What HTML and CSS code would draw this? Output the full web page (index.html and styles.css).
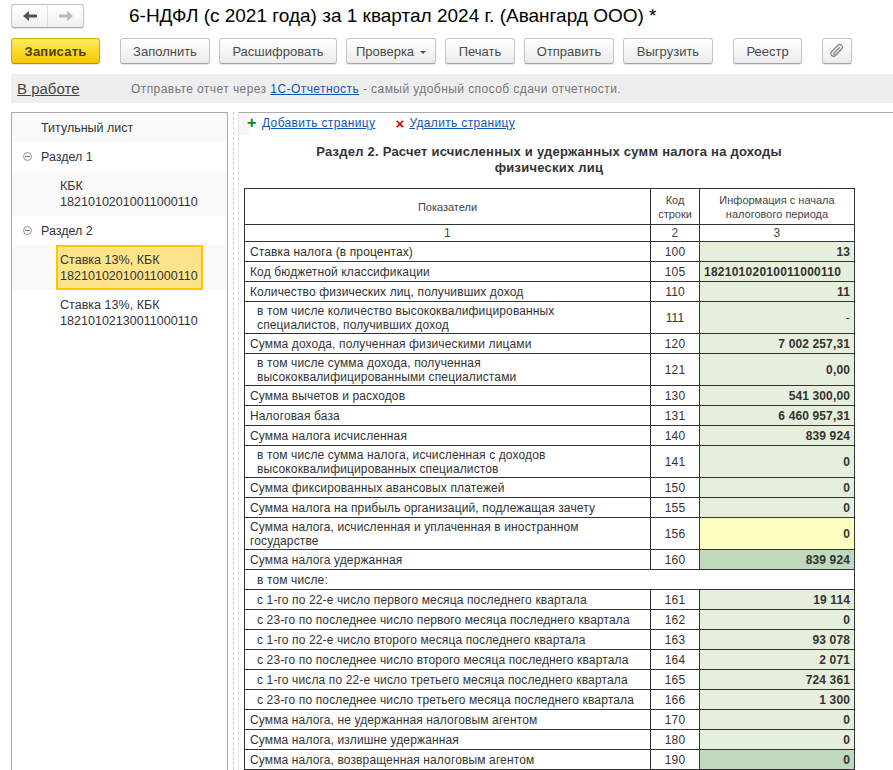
FILE: index.html
```html
<!DOCTYPE html>
<html lang="ru">
<head>
    <meta charset="UTF-8">
    <title>6-НДФЛ</title>
    <link rel="stylesheet" href="styles.css">
</head>
<body>
    <div class="head">
        <div class="nav">
            <div class="nav-btn">
                <svg width="16" height="12" viewBox="0 0 16 12"><path d="M1 6 L7 1 V4.500 H15 V7.500 H7 V11 Z" fill="#555"/></svg>
            </div>
            <div class="nav-btn">
                <svg width="16" height="12" viewBox="0 0 16 12"><path d="M15 6 L9 1 V4.500 H1 V7.500 H9 V11 Z" fill="#bbb"/></svg>
            </div>
        </div>
        <h1 class="title">6-НДФЛ (с 2021 года) за 1 квартал 2024 г. (Авангард ООО) *</h1>
    </div>

    <div class="toolbar">
        <div class="btn primary">Записать</div>
        <div class="btn w90 gap-big">Заполнить</div>
        <div class="btn w118">Расшифровать</div>
        <div class="btn w90">Проверка <span class="caret"></span></div>
        <div class="btn w70">Печать</div>
        <div class="btn w90">Отправить</div>
        <div class="btn w90">Выгрузить</div>
        <div class="btn w69 gap-big">Реестр</div>
        <div class="btn w30 gap-big">
            <svg width="16" height="16" viewBox="0 0 16 16"><path d="M5 13.500 L12.500 6 C14 4.500 13.500 3 12.500 2.200 C11.500 1.400 10 1.300 9 2.300 L2.800 8.500 C1.500 9.800 1.800 11.500 2.700 12.500 C3.700 13.500 5.300 13.800 6.500 12.500 L12 7 M10.800 4.200 L4.800 10.200 C4.300 10.800 5 11.500 5.600 11" fill="none" stroke="#888" stroke-width="1.300"/></svg>
        </div>
    </div>

    <div class="status">
        <a class="status-name">В работе</a>
        <span class="status-text">Отправьте отчет через <a class="link">1С-Отчетность</a> - самый удобный способ сдачи отчетности.</span>
    </div>

    <div class="main">
        <div class="tree">
            <div class="tree-row alt top">Титульный лист</div>
            <div class="tree-row group"><span class="minus"></span>Раздел 1</div>
            <div class="tree-row alt leaf"><div class="leaf-text">КБК<br>18210102010011000110</div></div>
            <div class="tree-row group"><span class="minus"></span>Раздел 2</div>
            <div class="tree-row alt leaf"><div class="leaf-text selected">Ставка 13%, КБК<br>18210102010011000110</div></div>
            <div class="tree-row leaf"><div class="leaf-text">Ставка 13%, КБК<br>18210102130011000110</div></div>
        </div>
        <div class="splitter"></div>
        <div class="content">
            <div class="actions">
                <span class="plus">+</span><a class="link">Добавить страницу</a>
                <span class="cross">×</span><a class="link">Удалить страницу</a>
            </div>
            <h2 class="sheet-title">Раздел 2. Расчет исчисленных и удержанных сумм налога на доходы физических лиц</h2>
            <table class="report">
                <colgroup><col class="c1"><col class="c2"><col class="c3"></colgroup>
                <tr class="r36"><td class="head-cell small">Показатели</td><td class="head-cell small">Код<br>строки</td><td class="head-cell small">Информация с начала<br>налогового периода</td></tr>
                <tr class="r17"><td class="head-cell">1</td><td class="head-cell">2</td><td class="head-cell">3</td></tr>
                <tr><td>Ставка налога (в процентах)</td><td class="code">100</td><td class="val">13</td></tr>
                <tr><td>Код бюджетной классификации</td><td class="code">105</td><td class="val kbk">18210102010011000110</td></tr>
                <tr><td>Количество физических лиц, получивших доход</td><td class="code">110</td><td class="val">11</td></tr>
                <tr class="r32"><td class="sub">в том числе количество высококвалифицированных<br>специалистов, получивших доход</td><td class="code">111</td><td class="val plain">-</td></tr>
                <tr><td>Сумма дохода, полученная физическими лицами</td><td class="code">120</td><td class="val">7 002 257,31</td></tr>
                <tr class="r32"><td class="sub">в том числе сумма дохода, полученная<br>высококвалифицированными специалистами</td><td class="code">121</td><td class="val">0,00</td></tr>
                <tr><td>Сумма вычетов и расходов</td><td class="code">130</td><td class="val">541 300,00</td></tr>
                <tr><td>Налоговая база</td><td class="code">131</td><td class="val">6 460 957,31</td></tr>
                <tr><td>Сумма налога исчисленная</td><td class="code">140</td><td class="val">839 924</td></tr>
                <tr class="r32"><td class="sub">в том числе сумма налога, исчисленная с доходов<br>высококвалифицированных специалистов</td><td class="code">141</td><td class="val">0</td></tr>
                <tr><td>Сумма фиксированных авансовых платежей</td><td class="code">150</td><td class="val">0</td></tr>
                <tr><td>Сумма налога на прибыль организаций, подлежащая зачету</td><td class="code">155</td><td class="val">0</td></tr>
                <tr class="r32"><td>Сумма налога, исчисленная и уплаченная в иностранном<br>государстве</td><td class="code">156</td><td class="val yellow">0</td></tr>
                <tr><td>Сумма налога удержанная</td><td class="code">160</td><td class="val dark">839 924</td></tr>
                <tr><td class="sub" colspan="3">в том числе:</td></tr>
                <tr><td class="sub">с 1-го по 22-е число первого месяца последнего квартала</td><td class="code">161</td><td class="val">19 114</td></tr>
                <tr><td class="sub">с 23-го по последнее число первого месяца последнего квартала</td><td class="code">162</td><td class="val">0</td></tr>
                <tr><td class="sub">с 1-го по 22-е число второго месяца последнего квартала</td><td class="code">163</td><td class="val">93 078</td></tr>
                <tr><td class="sub">с 23-го по последнее число второго месяца последнего квартала</td><td class="code">164</td><td class="val">2 071</td></tr>
                <tr><td class="sub">с 1-го числа по 22-е число третьего месяца последнего квартала</td><td class="code">165</td><td class="val">724 361</td></tr>
                <tr><td class="sub">с 23-го по последнее число третьего месяца последнего квартала</td><td class="code">166</td><td class="val">1 300</td></tr>
                <tr><td>Сумма налога, не удержанная налоговым агентом</td><td class="code">170</td><td class="val">0</td></tr>
                <tr><td>Сумма налога, излишне удержанная</td><td class="code">180</td><td class="val">0</td></tr>
                <tr><td>Сумма налога, возвращенная налоговым агентом</td><td class="code">190</td><td class="val dark">0</td></tr>
            </table>
        </div>
    </div>
</body>
</html>
```

FILE: styles.css
```css
html, body {
    height: 770px;
    overflow: hidden;
}
body {
    margin: 0;
    background-color: #fff;
    font-family: "Liberation Sans", Arial, sans-serif;
    font-size: 12px;
    color: #333;
}
a.link {
    color: #0a56b8;
    text-decoration: underline;
}

/* head */
.head {
    display: flex;
    align-items: center;
    height: 24px;
    padding: 4px 0 0 11px;
}
.nav {
    display: flex;
    width: 73px;
    height: 24px;
    box-sizing: border-box;
    border: 1px solid #c4c4c4;
    border-bottom-color: #a8a8a8;
    border-radius: 3px;
    background: linear-gradient(#fff, #f0f0f0);
    box-shadow: 0 1px 1px rgba(0, 0, 0, 0.12);
}
.nav-btn {
    flex: 1;
    display: flex;
    align-items: center;
    justify-content: center;
}
.nav-btn + .nav-btn {
    border-left: 1px solid #ddd;
}
.title {
    margin: 0 0 0 45px;
    font-size: 19px;
    font-weight: normal;
    color: #000;
    white-space: nowrap;
}

/* toolbar */
.toolbar {
    display: flex;
    gap: 9px;
    height: 26px;
    margin-top: 10px;
    padding-left: 11px;
}
.btn {
    display: flex;
    align-items: center;
    justify-content: center;
    box-sizing: border-box;
    height: 26px;
    border: 1px solid #c4c4c4;
    border-bottom-color: #a4a4a4;
    border-radius: 3px;
    background: linear-gradient(#fff, #ececec);
    box-shadow: 0 1px 1px rgba(0, 0, 0, 0.1);
    font-size: 13px;
    color: #4a4a4a;
    white-space: nowrap;
}
.primary {
    width: 89px;
    border-color: #d0aa00;
    border-bottom-color: #b59400;
    background: linear-gradient(#ffec5c, #f5c800);
    font-weight: bold;
    letter-spacing: 0.2px;
    color: #4d4100;
}
.gap-big { margin-left: 11px; }
.w90 { width: 90px; }
.w118 { width: 118px; }
.w70 { width: 70px; }
.w69 { width: 69px; }
.w30 { width: 30px; }
.caret {
    width: 0;
    height: 0;
    margin: 2px 0 0 6px;
    border-left: 3px solid transparent;
    border-right: 3px solid transparent;
    border-top: 3px solid #555;
}

/* status */
.status {
    display: flex;
    align-items: center;
    height: 29px;
    margin: 10px 0 0 11px;
    padding-left: 6px;
    background-color: #eee;
}
.status-name {
    width: 114px;
    font-size: 15px;
    color: #444;
    text-decoration: underline;
}
.status-text {
    color: #777;
    letter-spacing: 0.43px;
}

/* main */
.main {
    display: flex;
    height: 658px;
    margin: 9px 0 0 11px;
}
.tree {
    flex: none;
    width: 217px;
    box-sizing: border-box;
    border: 1px solid #aaa;
    border-bottom: none;
    font-size: 12.5px;
}
.tree-row {
    display: flex;
    align-items: center;
    height: 29px;
}
.alt { background-color: #f9f9f9; }
.top { padding-left: 29px; }
.group { padding-left: 11px; }
.leaf { height: 45px; padding-left: 44px; }
.leaf-text {
    box-sizing: border-box;
    width: 147px;
    height: 45px;
    padding: 6px 0 0 3px;
    border: 1px solid transparent;
    line-height: 16px;
    letter-spacing: 0.03px;
}
.selected {
    border: 2px solid #fdc700;
    padding: 5px 0 0 2px;
    background-color: #fde38a;
}
.minus {
    position: relative;
    box-sizing: border-box;
    width: 9px;
    height: 9px;
    margin-right: 9px;
    border: 1px solid #999;
    border-radius: 50%;
}
.minus::after {
    content: "";
    position: absolute;
    left: 1px;
    right: 1px;
    top: 3px;
    height: 1px;
    background-color: #777;
}
.splitter {
    flex: none;
    width: 0;
    margin: 0 4px 0 5px;
    border-left: 1px dashed #ccc;
}
.content {
    position: relative;
    flex: 1;
    min-width: 0;
    border-top: 1px solid #aaa;
    border-left: 1px solid #e4e4e4;
    padding-left: 5px;
}
/* grey tile behind the plus sign */
.content::before {
    content: "";
    position: absolute;
    left: 0;
    top: 0;
    width: 10px;
    height: 22px;
    background-color: #f6f6f6;
}
.actions {
    position: relative;
    display: flex;
    align-items: center;
    height: 20px;
    padding-left: 3px;
}
.actions .link {
    letter-spacing: 0.35px;
}
.plus {
    width: 15px;
    font-size: 16px;
    font-weight: bold;
    color: #0a8a0a;
}
.cross {
    width: 14px;
    margin-left: 20px;
    font-size: 15px;
    font-weight: bold;
    color: #e00000;
}
.sheet-title {
    box-sizing: border-box;
    width: 610px;
    margin: 11px 0 0;
    padding: 0 60px;
    font-size: 13px;
    line-height: 16px;
    letter-spacing: 0.23px;
    text-align: center;
    color: #333;
}

/* table */
.report {
    table-layout: fixed;
    width: 610px;
    margin-top: 12px;
    border-collapse: collapse;
}
.c1 { width: 406px; }
.c2 { width: 49px; }
.c3 { width: 155px; }
.report td {
    height: 20px;
    box-sizing: border-box;
    padding: 0 5px;
    border: 1px solid #333;
    line-height: 14px;
    letter-spacing: 0.13px;
    white-space: nowrap;
    overflow: hidden;
}
.report .r36 td { height: 36px; }
.report .r17 td { height: 17px; }
.report .r32 td { height: 32px; }
.report .sub { padding-left: 12px; }
.report .head-cell {
    text-align: center;
    color: #444;
}
.report .small { font-size: 11px; letter-spacing: 0; }
.report .code { text-align: center; padding: 0; }
.report .val {
    padding: 0 4px;
    background-color: #e6eedc;
    text-align: right;
    font-weight: bold;
}
.report .plain { font-weight: normal; }
.report .kbk { text-align: left; letter-spacing: 0.25px; }
.report .yellow { background-color: #ffffc0; }
.report .dark { background-color: #bfd9bd; }
```
